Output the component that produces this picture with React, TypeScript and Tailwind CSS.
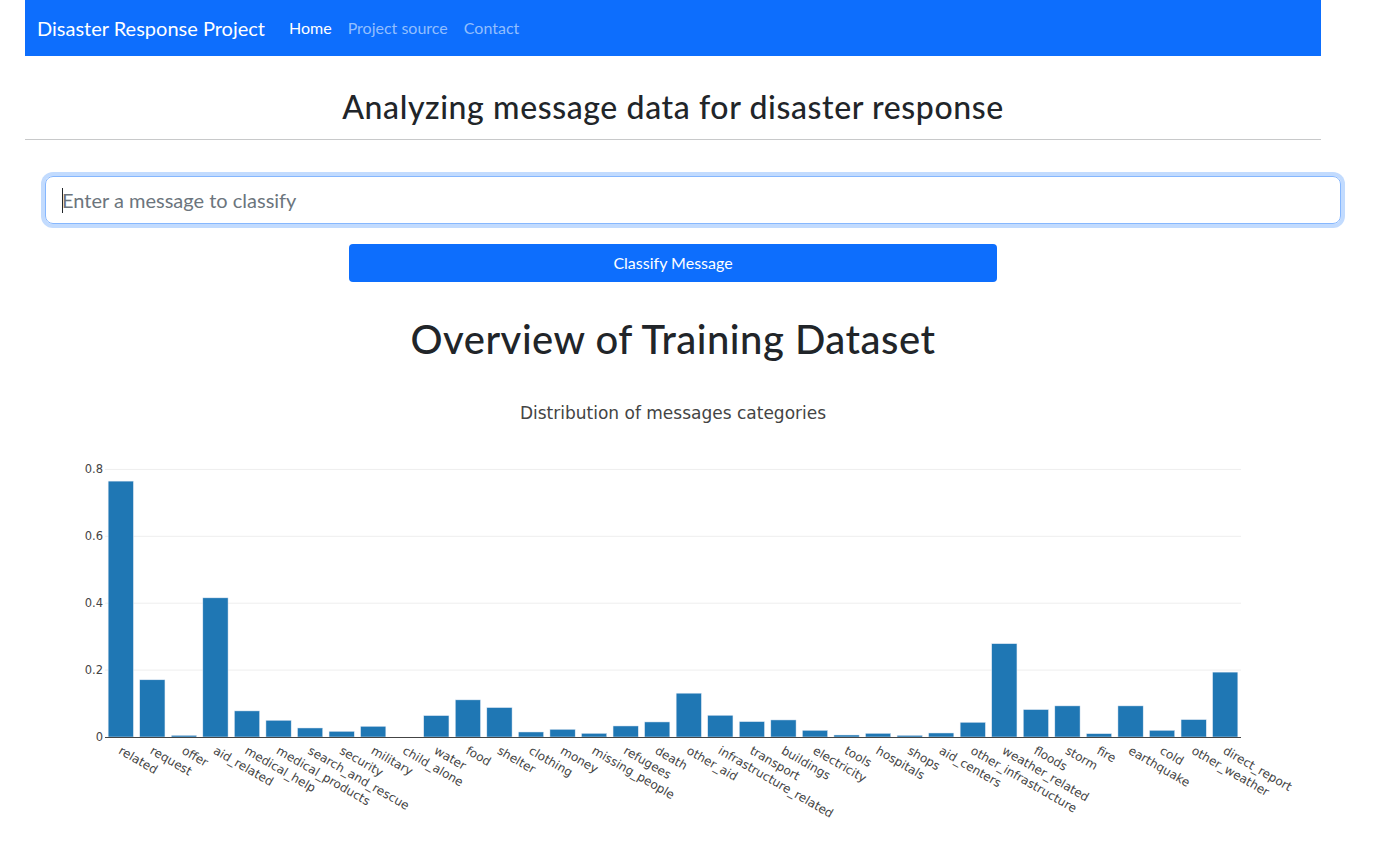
const categories: [string, number][] = [
  ["related", 0.765],
  ["request", 0.171],
  ["offer", 0.005],
  ["aid_related", 0.416],
  ["medical_help", 0.078],
  ["medical_products", 0.05],
  ["search_and_rescue", 0.027],
  ["security", 0.017],
  ["military", 0.032],
  ["child_alone", 0],
  ["water", 0.064],
  ["food", 0.111],
  ["shelter", 0.088],
  ["clothing", 0.015],
  ["money", 0.023],
  ["missing_people", 0.011],
  ["refugees", 0.033],
  ["death", 0.045],
  ["other_aid", 0.131],
  ["infrastructure_related", 0.065],
  ["transport", 0.046],
  ["buildings", 0.051],
  ["electricity", 0.02],
  ["tools", 0.006],
  ["hospitals", 0.011],
  ["shops", 0.005],
  ["aid_centers", 0.012],
  ["other_infrastructure", 0.044],
  ["weather_related", 0.279],
  ["floods", 0.082],
  ["storm", 0.093],
  ["fire", 0.01],
  ["earthquake", 0.093],
  ["cold", 0.02],
  ["other_weather", 0.052],
  ["direct_report", 0.194],
];

// plot area in svg coords (svg starts at page x=25, y=380)
const X0 = 80;
const PLOT_W = 1136;
const ZERO_Y = 358;
const PX_PER_UNIT = 334.5;
const BAND = PLOT_W / categories.length;
const BAR_W = BAND * 0.8;

function CategoryChart() {
  return (
    <svg width={1296} height={467} className="block" style={{ fontFamily: '"DejaVu Sans", verdana, arial, sans-serif' }}>
      <text x={648} y={40} textAnchor="middle" fontSize={17} fill="#444">
        Distribution of messages categories
      </text>

      {/* grid */}
      {[0.2, 0.4, 0.6, 0.8].map((v) => (
        <line
          key={v}
          x1={X0}
          x2={X0 + PLOT_W}
          y1={ZERO_Y - v * PX_PER_UNIT}
          y2={ZERO_Y - v * PX_PER_UNIT}
          stroke="#eee"
          strokeWidth={1}
        />
      ))}
      {[0, 0.2, 0.4, 0.6, 0.8].map((v) => (
        <text key={v} x={78} y={ZERO_Y - v * PX_PER_UNIT + 4} textAnchor="end" fontSize={11.5} fill="#444">
          {v}
        </text>
      ))}

      {/* bars */}
      {categories.map(([name, value], i) => {
        const h = value * PX_PER_UNIT;
        const x = X0 + i * BAND + (BAND - BAR_W) / 2;
        return (
          <rect key={name} x={x} y={ZERO_Y - h} width={BAR_W} height={h} fill="#1f77b4" stroke="#E5ECF6" strokeWidth={0.5} />
        );
      })}

      <line x1={X0} x2={X0 + PLOT_W} y1={ZERO_Y + 0.5} y2={ZERO_Y + 0.5} stroke="#444" strokeWidth={1} />

      {/* x labels */}
      {categories.map(([name], i) => {
        const cx = X0 + i * BAND + BAND / 2 - 3;
        const cy = 374;
        return (
          <text key={name} x={cx} y={cy} fontSize={12} fill="#444" transform={`rotate(30 ${cx} ${cy})`}>
            {name}
          </text>
        );
      })}
    </svg>
  );
}

export default function App() {
  return (
    <div className="min-h-[847px] bg-white font-['Lato',sans-serif] text-[#212529]">
      <div className="ml-[25px] w-[1296px]">
        {/* navbar */}
        <nav className="flex h-[56px] items-center bg-[#0d6efd] px-3">
          <a href="#" className="mr-4 text-[20px] text-white">
            Disaster Response Project
          </a>
          <div className="flex items-center text-[16px]">
            <a href="#" className="px-2 text-white">Home</a>
            <a href="#" className="px-2 text-[#92befe]">Project source</a>
            <a href="#" className="px-2 text-[#92befe]">Contact</a>
          </div>
        </nav>

        <h2 className="mt-[32px] text-center text-[32px] font-medium leading-[1.2] tracking-[0.6px]">
          Analyzing message data for disaster response
        </h2>
        <hr className="mt-[13px] border-t border-[#c8c9ca]" />

        {/* form */}
        <div className="relative ml-[20px] mt-[36px] w-[1296px]">
          <input
            type="text"
            placeholder="Enter a message to classify"
            className="block h-[48px] w-full rounded-lg border border-[#86b7fe] px-4 text-[20px] outline-none shadow-[0_0_0_4px_rgba(13,110,253,0.25)] placeholder:text-[#6c757d]"
          />
          <span className="absolute left-[17px] top-[12px] h-[25px] w-px bg-[#212529]" />
        </div>
        <div className="mt-[20px] flex justify-center">
          <button className="h-[38px] w-[648px] rounded bg-[#0d6efd] text-[16px] text-white">
            Classify Message
          </button>
        </div>

        <h1 className="mt-[33px] text-center text-[40px] font-medium leading-[1.2] tracking-[0.5px]">
          Overview of Training Dataset
        </h1>

        <div className="mt-[16px]">
          <CategoryChart />
        </div>
      </div>
    </div>
  );
}
